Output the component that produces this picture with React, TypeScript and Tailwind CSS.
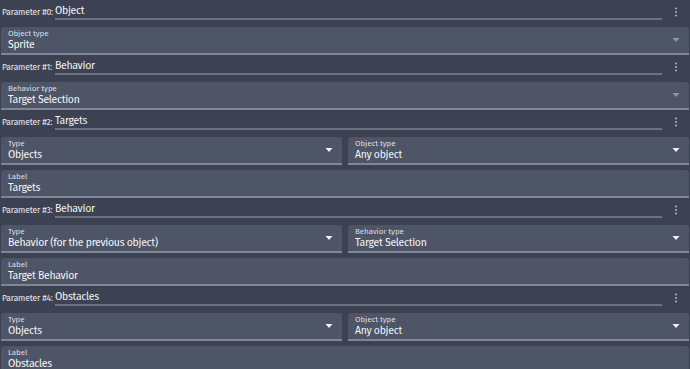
import React from "react";

type Field = { label: string; value: string; select?: "on" | "off" };

function Caret({ dim }: { dim?: boolean }) {
    return (
        <svg width="8" height="5" viewBox="0 0 8 5" className="shrink-0">
            <path d="M0.5 0 L7.5 0 L4 4 Z" fill={dim ? "#8f95a3" : "#f2f3f5"} />
        </svg>
    );
}

function Kebab() {
    return (
        <svg width="4" height="10" viewBox="0 0 4 10">
            <circle cx="2" cy="1.5" r="1" fill="#a9b8c6" />
            <circle cx="2" cy="5" r="1" fill="#a9b8c6" />
            <circle cx="2" cy="8.5" r="1" fill="#a9b8c6" />
        </svg>
    );
}

function Box({ f }: { f: Field }) {
    return (
        <div className="flex-1 h-[28px] bg-[#4e5567] rounded-t-[3px] border-b-2 border-[#7f8697] flex items-center pl-[7px] pr-[9px]">
            <div className="flex-1 flex flex-col leading-none whitespace-nowrap">
                <span className="text-[8px] tracking-[-0.1px] text-[#d9dce2] mb-[2px]">{f.label}</span>
                <span className="text-[10.5px] tracking-[-0.3px] text-[#f3f4f6]">{f.value}</span>
            </div>
            {f.select && <Caret dim={f.select === "off"} />}
        </div>
    );
}

function Param({ n, name, rows }: { n: number; name: string; rows: Field[][] }) {
    return (
        <div>
            <div className="h-[20px] flex items-end">
                <span className="pl-[2px] pb-[4px] text-[8.5px] tracking-[-0.15px] whitespace-nowrap text-[#e8eaee] leading-none w-[55px] shrink-0">
                    Parameter #{n}:
                </span>
                <div className="w-[607px] border-b-2 border-[#6b7282] text-[10.5px] tracking-[-0.3px] text-[#f3f4f6] leading-none pb-[2px]">
                    {name}
                </div>
                <div className="flex-1 flex justify-center pb-[3px]">
                    <Kebab />
                </div>
            </div>
            <div className="mt-[7px] flex flex-col gap-[5px] px-[1px]">
                {rows.map((r, i) => (
                    <div key={i} className="flex gap-[6px]">
                        {r.map((f) => (
                            <Box key={f.label} f={f} />
                        ))}
                    </div>
                ))}
            </div>
        </div>
    );
}

export default function App() {
    return (
        <div className="w-[690px] h-[369px] overflow-hidden bg-[#3c4252] font-['Fira_Sans','Roboto',sans-serif]">
            <Param n={0} name="Object" rows={[[{ label: "Object type", value: "Sprite", select: "off" }]]} />
            <Param n={1} name="Behavior" rows={[[{ label: "Behavior type", value: "Target Selection", select: "off" }]]} />
            <Param
                n={2}
                name="Targets"
                rows={[
                    [
                        { label: "Type", value: "Objects", select: "on" },
                        { label: "Object type", value: "Any object", select: "on" },
                    ],
                    [{ label: "Label", value: "Targets" }],
                ]}
            />
            <Param
                n={3}
                name="Behavior"
                rows={[
                    [
                        { label: "Type", value: "Behavior (for the previous object)", select: "on" },
                        { label: "Behavior type", value: "Target Selection", select: "on" },
                    ],
                    [{ label: "Label", value: "Target Behavior" }],
                ]}
            />
            <Param
                n={4}
                name="Obstacles"
                rows={[
                    [
                        { label: "Type", value: "Objects", select: "on" },
                        { label: "Object type", value: "Any object", select: "on" },
                    ],
                    [{ label: "Label", value: "Obstacles" }],
                ]}
            />
        </div>
    );
}
